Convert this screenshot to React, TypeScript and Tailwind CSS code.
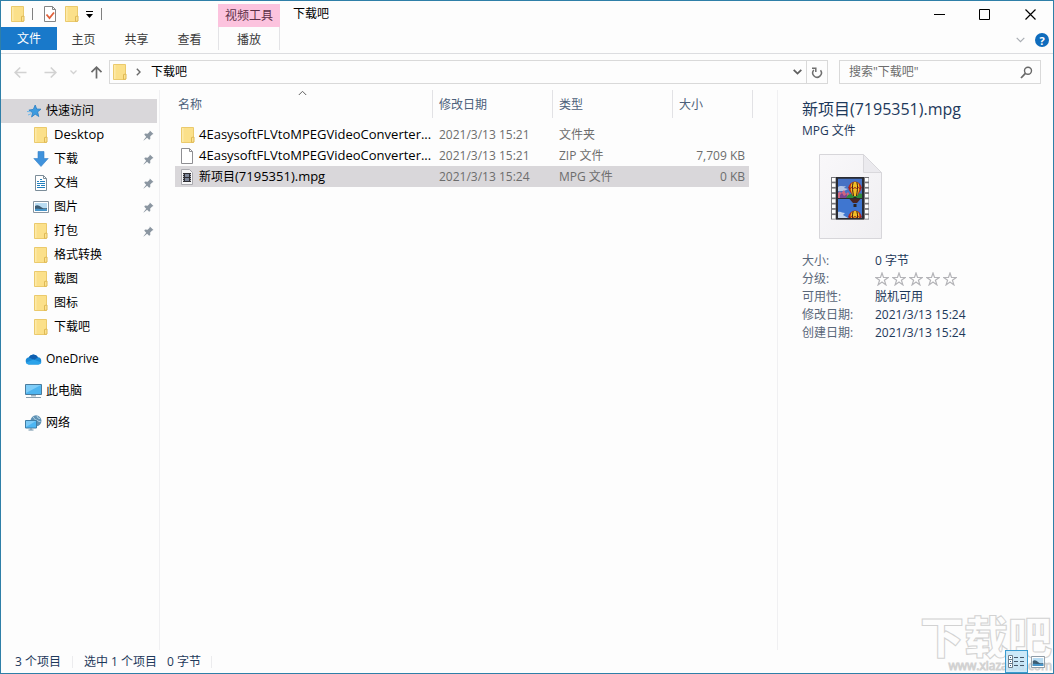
import React, { useState } from 'react';
import clsx from 'clsx';

type IconName = 'folder' | 'star' | 'download' | 'document' | 'picture' | 'cloud' | 'pc' | 'network' | 'file' | 'video';

interface NavEntry {
  label: string;
  icon: IconName;
  pinned?: boolean;
}

const quickAccess: NavEntry[] = [
  { label: 'Desktop', icon: 'folder', pinned: true },
  { label: '下载', icon: 'download', pinned: true },
  { label: '文档', icon: 'document', pinned: true },
  { label: '图片', icon: 'picture', pinned: true },
  { label: '打包', icon: 'folder', pinned: true },
  { label: '格式转换', icon: 'folder' },
  { label: '截图', icon: 'folder' },
  { label: '图标', icon: 'folder' },
  { label: '下载吧', icon: 'folder' },
];

const roots: NavEntry[] = [
  { label: 'OneDrive', icon: 'cloud' },
  { label: '此电脑', icon: 'pc' },
  { label: '网络', icon: 'network' },
];

const files: { name: string; cjk?: string; date: string; type: string; size: string; icon: IconName }[] = [
  { name: '4EasysoftFLVtoMPEGVideoConverter...', date: '2021/3/13 15:21', type: '文件夹', size: '', icon: 'folder' },
  { name: '4EasysoftFLVtoMPEGVideoConverter...', date: '2021/3/13 15:21', type: 'ZIP 文件', size: '7,709 KB', icon: 'file' },
  { name: '(7195351).mpg', cjk: '新项目', date: '2021/3/13 15:24', type: 'MPG 文件', size: '0 KB', icon: 'video' },
];

export default function App() {
  const [selected, setSelected] = useState(2);

  return (
    <div className="relative flex min-h-screen flex-col border border-[#2f7fa8] bg-[#fdfdfd] text-xs text-black font-['Open_Sans','Noto_Sans_CJK_SC',sans-serif]">
      <TitleBar />
      <RibbonTabs />
      <AddressRow />

      <div className="flex flex-1">
        <Sidebar />
        <main className="min-w-0 flex-1 pl-[15px]">
          <FileTable selected={selected} onSelect={setSelected} />
        </main>
        <DetailsPane />
      </div>

      <StatusBar />

      {/* Watermark */}
      <div className="pointer-events-none absolute right-px bottom-0 flex flex-col items-end" aria-hidden="true">
        <span className="text-[44px] leading-[44px] font-black text-transparent [-webkit-text-stroke:1px_#d2d2d2]">下载吧</span>
        <span className="text-xs leading-[14px] text-transparent [-webkit-text-stroke:1px_#d2d2d2]">www.xiazaiba.com</span>
      </div>
    </div>
  );
}

function TitleBar() {
  return (
    <header className="flex h-[26px] items-stretch">
      <div className="flex w-[217px] items-center pl-[9px]">
        <Icon name="folder" />
        <span className="mx-[6px] h-3 w-px bg-[#808080]" />
        <button aria-label="属性" className="ml-[3px]">
          <svg width="16" height="18" viewBox="0 0 16 18">
            <path d="M2.500 1.500h8l3 3v12h-11z" fill="#fff" stroke="#858585" />
            <path d="M10.500 1.500v3h3" fill="none" stroke="#858585" />
            <path d="M4.500 9.500l3 3.500 4.500-5.500" fill="none" stroke="#e0603a" strokeWidth="1.800" />
          </svg>
        </button>
        <button aria-label="新建文件夹" className="ml-[6px]"><Icon name="folder" /></button>
        <button aria-label="自定义快速访问工具栏" className="ml-[5px]">
          <svg width="9" height="9" viewBox="0 0 9 9"><path d="M1 1.500h7" stroke="#000" strokeWidth="1" /><path d="M1 4h7l-3.500 4z" /></svg>
        </button>
        <span className="ml-[7px] h-3 w-px bg-[#808080]" />
      </div>
      <div className="mt-[3px] flex w-[62px] items-center justify-center bg-[#fcc3de] text-[#5b3047]">视频工具</div>
      <h1 className="flex items-center pl-[13px]">下载吧</h1>
      <div className="ml-auto flex">
        <button aria-label="最小化" className="flex w-[46px] items-center justify-center">
          <svg width="11" height="11" viewBox="0 0 11 11"><path d="M0 5.500h11" stroke="#000" /></svg>
        </button>
        <button aria-label="最大化" className="flex w-[45px] items-center justify-center">
          <svg width="11" height="11" viewBox="0 0 11 11"><path d="M.5.500h10v10H.5z" fill="none" stroke="#000" /></svg>
        </button>
        <button aria-label="关闭" className="flex w-[46px] items-center justify-center">
          <svg width="11" height="11" viewBox="0 0 11 11"><path d="M.5.500l10 10M10.500.500l-10 10" stroke="#000" strokeWidth="1.200" /></svg>
        </button>
      </div>
    </header>
  );
}

function RibbonTabs() {
  return (
    <div className="flex h-[27px] border-b border-[#dcdde0] text-[#3b3b3b]">
      <button className="h-[23px] w-[56px] bg-[#1979ca] text-white">文件</button>
      {['主页', '共享', '查看'].map(tab => (
        <button key={tab} className="h-[23px] w-[53px] pt-[2px]">{tab}</button>
      ))}
      <button className="ml-[2px] h-[23px] w-[62px] border-x border-[#e3e3e6] pt-[2px]">播放</button>
      <div className="ml-auto flex h-[26px] items-center gap-[10px] pr-[4px]">
        <button aria-label="展开功能区"><Chevron className="text-[#a9adb3]" /></button>
        <button aria-label="帮助" className="flex size-[14px] items-center justify-center rounded-full bg-[#0f6cbd] text-[11px] leading-none font-bold text-white">?</button>
      </div>
    </div>
  );
}

function AddressRow() {
  return (
    <div className="flex h-9 items-center pr-3">
      <div className="flex w-[108px] items-center pl-[13px]">
        <button aria-label="返回"><Arrow className="text-[#d2d2d2]" /></button>
        <button aria-label="前进" className="ml-[17px]"><Arrow className="rotate-180 text-[#d2d2d2]" /></button>
        <button aria-label="最近位置" className="ml-[13px]">
          <svg width="7" height="5" viewBox="0 0 7 5"><path d="M.5.500l3 3 3-3" fill="none" stroke="#d2d2d2" strokeWidth="1.300" /></svg>
        </button>
        <button aria-label="上移" className="ml-[13px]"><Arrow className="rotate-90 text-[#6a6a6a]" /></button>
      </div>
      <nav className="flex h-6 min-w-0 flex-1 items-center border border-[#d9d9d9] pl-[2px]">
        <Icon name="folder" />
        <svg className="ml-[8px]" width="5" height="8" viewBox="0 0 5 8"><path d="M.8.800L4 4 .8 7.200" fill="none" stroke="#6a6a6a" strokeWidth="1.400" /></svg>
        <button className="ml-[10px] pb-px">下载吧</button>
        <button aria-label="以前的位置" className="mr-[4px] ml-auto"><Chevron className="text-[#5f5f5f]" bold /></button>
        <button aria-label="刷新" className="flex h-full w-[21px] items-center justify-center border-l border-[#d9d9d9]">
          <svg width="12" height="13" viewBox="0 0 12 13">
            <path d="M9.500 4.300a4.300 4.300 0 1 1-6.700-.2" fill="none" stroke="#6f6f6f" strokeWidth="1.500" />
            <path d="M1 2.200h3.800V6" fill="none" stroke="#6f6f6f" strokeWidth="1.500" />
          </svg>
        </button>
      </nav>
      <label className="ml-[11px] flex h-6 w-[202px] items-center border border-[#d9d9d9] pr-[7px] pl-[9px]">
        <input aria-label="搜索" placeholder={'搜索"下载吧"'} className="min-w-0 flex-1 outline-none placeholder:text-[#6d6d6d]" />
        <svg width="13" height="13" viewBox="0 0 13 13">
          <circle cx="8" cy="4.800" r="3.500" fill="none" stroke="#686868" strokeWidth="1.400" />
          <path d="M5.400 7.400L1 12" stroke="#686868" strokeWidth="1.800" />
        </svg>
      </label>
    </div>
  );
}

function Sidebar() {
  return (
    <aside className="w-[159px] border-r border-[#f0f0f2] pt-[9px]">
      <button className="flex h-6 w-[156px] items-center bg-[#d9d7da] pl-[25px]">
        <Icon name="star" />
        <span className="ml-[4px]">快速访问</span>
      </button>
      {quickAccess.map(item => (
        <button key={item.label} className="flex h-6 w-[156px] items-center pr-[3px] pl-[32px]">
          <Icon name={item.icon} />
          <span className={clsx('ml-[5px]', item.label === 'Desktop' && 'text-[13px]')}>{item.label}</span>
          {item.pinned && <PinIcon />}
        </button>
      ))}
      {roots.map(item => (
        <button key={item.label} className="mt-2 flex h-6 w-[156px] items-center pl-[24px]">
          <Icon name={item.icon} />
          <span className="ml-[4px]">{item.label}</span>
        </button>
      ))}
    </aside>
  );
}

function FileTable({ selected, onSelect }: { selected: number; onSelect: (i: number) => void }) {
  const heading = 'flex h-[28px] w-full items-center border-r border-[#e2e2e5] pt-px text-[#4c607a]';

  return (
    <table className="w-[578px] table-fixed">
      <colgroup>
        <col className="w-[258px]" />
        <col className="w-[120px]" />
        <col className="w-[120px]" />
        <col className="w-[76px]" />
        <col className="w-[4px]" />
      </colgroup>
      <thead>
        <tr className="text-left">
          <th className="p-0 pb-[6px] font-normal">
            <button className={clsx(heading, 'relative pl-[3px]')}>
              名称
              <svg className="absolute top-0 left-[123px]" width="9" height="6" viewBox="0 0 9 6"><path d="M.8 5l3.700-3.700L8.200 5" fill="none" stroke="#606060" /></svg>
            </button>
          </th>
          <th className="p-0 pb-[6px] font-normal"><button className={clsx(heading, 'pl-[6px]')}>修改日期</button></th>
          <th className="p-0 pb-[6px] font-normal"><button className={clsx(heading, 'pl-[6px]')}>类型</button></th>
          <th colSpan={2} className="p-0 pb-[6px] font-normal"><button className={clsx(heading, 'pl-[6px]')}>大小</button></th>
        </tr>
      </thead>
      <tbody>
        {files.map((file, i) => {
          const cell = clsx('h-[21px] p-0 leading-[21px]', selected === i && 'bg-[#d9d7da]');
          return (
            <tr key={i} onClick={() => onSelect(i)} className="cursor-default text-[#6d6d6d]">
              <td className={cell}>
                <div className="flex items-center pl-[5px] text-black">
                  <Icon name={file.icon} />
                  <span className="ml-[3px] whitespace-nowrap">{file.cjk}<span className="text-[13px]">{file.name}</span></span>
                </div>
              </td>
              <td className={clsx(cell, 'pl-[6px]')}>{file.date}</td>
              <td className={clsx(cell, 'pl-[6px]')}>{file.type}</td>
              <td className={clsx(cell, 'pr-[4px] text-right')}>{file.size}</td>
              <td className="p-0" />
            </tr>
          );
        })}
      </tbody>
    </table>
  );
}

function DetailsPane() {
  const [rating, setRating] = useState(0);

  return (
    <section className="w-[276px] border-l border-[#f0f0f2] pt-[7px] pl-[24px] text-[#1e395b]">
      <h2 className="text-base leading-6">新项目(7195351).mpg</h2>
      <p className="leading-5">MPG 文件</p>
      <FilmPreview />
      <dl className="mt-[12px] grid grid-cols-[73px_1fr] leading-[18px]">
        <dt className="text-[#5a6779]">大小:</dt>
        <dd>0 字节</dd>
        <dt className="text-[#5a6779]">分级:</dt>
        <dd className="flex items-center gap-[3px]">
          {[1, 2, 3, 4, 5].map(n => (
            <button key={n} aria-label={`${n} 星`} onClick={() => setRating(n)}>
              <svg width="14" height="14" viewBox="0 0 14 14">
                <path d="M7 1l1.500 4.500h4.700L9.400 8.300l1.500 4.600L7 10.100l-3.900 2.800 1.500-4.600L.8 5.500h4.700z" fill={n <= rating ? '#f2c94c' : '#fff'} stroke="#b4b4b8" strokeWidth="1.200" />
              </svg>
            </button>
          ))}
        </dd>
        <dt className="text-[#5a6779]">可用性:</dt>
        <dd>脱机可用</dd>
        <dt className="text-[#5a6779]">修改日期:</dt>
        <dd>2021/3/13 15:24</dd>
        <dt className="text-[#5a6779]">创建日期:</dt>
        <dd>2021/3/13 15:24</dd>
      </dl>
    </section>
  );
}

function StatusBar() {
  return (
    <footer className="flex h-[23px] items-center pl-[14px] text-[#1e395b]">
      <span>3 个项目</span>
      <span className="mx-[11px] h-3 w-px bg-[#ececee]" />
      <span>选中 1 个项目</span>
      <span className="ml-[10px]">0 字节</span>
      <span className="ml-[10px] h-3 w-px bg-[#ececee]" />
      <div className="z-10 ml-auto flex items-center gap-[3px] pr-[8px]">
        <button aria-label="详细信息" className="flex h-[23px] w-[23px] items-center justify-center border border-[#3a9bd0] bg-[#bfe3f7]/80">
          <svg width="17" height="13" viewBox="0 0 17 13">
            <path d="M.5.500h4v12h-4zM.5 4.500h4M.5 8.500h4" fill="#fff" stroke="#6f7f8c" />
            <path d="M2 2.500h1M2 6.500h1M2 10.500h1" stroke="#2a5f8e" />
            <path d="M6 2.500h4M12 2.500h4M6 6.500h4M12 6.500h4M6 10.500h4M12 10.500h4" stroke="#46586a" />
          </svg>
        </button>
        <button aria-label="大图标"><PictureGlyph width={14} height={12} /></button>
      </div>
    </footer>
  );
}

// --- Icons ---

function Arrow({ className }: { className?: string }) {
  return (
    <svg className={className} width="13" height="13" viewBox="0 0 13 13">
      <path d="M6.200 1.500l-5 5 5 5M1.500 6.500h11" fill="none" stroke="currentColor" strokeWidth="1.700" />
    </svg>
  );
}

function Chevron({ className, bold }: { className?: string; bold?: boolean }) {
  return (
    <svg className={className} width="9" height="6" viewBox="0 0 9 6">
      <path d="M.7.800l3.800 3.800L8.300.800" fill="none" stroke="currentColor" strokeWidth={bold ? 1.8 : 1.2} />
    </svg>
  );
}

function PinIcon() {
  return (
    <svg className="ml-auto" width="11" height="11" viewBox="0 0 11 11">
      <path d="M6.800.500l3.700 3.500-1.300.4-2 2.200.1 2.500-1.200.6-2-2L.800 10.500.500 10.200l2.700-3.500-1.900-1.900.7-1.200 2.600.1 2-2z" fill="#8b96a1" />
    </svg>
  );
}

function PictureGlyph({ width = 16, height = 12 }: { width?: number; height?: number }) {
  return (
    <svg width={width} height={height} viewBox="0 0 16 12" preserveAspectRatio="none">
      <path d="M.5.500h15v11H.5z" fill="#fff" stroke="#8795a1" />
      <path d="M2 2h12v8H2z" fill="#b9dcf2" />
      <path d="M2 5c2-1.500 4-.8 6 1s4 1.200 6 1v3H2z" fill="#3d5c72" />
      <path d="M2 8c3-.8 6 .6 12-.3V10H2z" fill="#4795c9" />
    </svg>
  );
}

function Icon({ name }: { name: IconName }) {
  switch (name) {
    case 'folder':
      return (
        <svg width="16" height="16" viewBox="0 0 16 16">
          <path d="M1.500.500h12v15h-12z" fill="#fbe08a" stroke="#ebca6c" />
          <path d="M2 1h1.500v14H2z" fill="#fdeaa9" />
          <path d="M11.500 10.500l2.500-.5v5l-2.500.5z" fill="#fce391" stroke="#dfb955" />
        </svg>
      );
    case 'star':
      return (
        <svg width="16" height="16" viewBox="0 0 16 16">
          <path d="M9.200 2l1.500 4 4.300.2-3.400 2.700 1.200 4.600-3.600-2.300L5.600 14l.9-4.300-3.600-2.600 4.400-.7z" fill="#3d9be0" stroke="#2a7fc4" strokeWidth=".8" />
          <path d="M1 8.500l4 .3M2 12l3-1.200" stroke="#70b8ea" />
        </svg>
      );
    case 'download':
      return (
        <svg width="16" height="16" viewBox="0 0 16 16">
          <path d="M5 .5h6v7h4.200L8 15.500.8 7.500H5z" fill="#3f92dc" stroke="#3582c8" strokeWidth=".6" />
        </svg>
      );
    case 'document':
      return (
        <svg width="16" height="16" viewBox="0 0 16 16">
          <path d="M2.500.500h8l3 3v12h-11z" fill="#fff" stroke="#7c8d99" />
          <path d="M10.500.500v3h3" fill="none" stroke="#7c8d99" />
          <path d="M7 4.500h2M4 6.500h2M7 6.500h5M4 8.500h8M4 10.500h3M8 10.500h4M4 12.500h8" stroke="#2380bd" strokeWidth="1.200" />
        </svg>
      );
    case 'picture':
      return <PictureGlyph />;
    case 'cloud':
      return (
        <svg width="17" height="16" viewBox="0 0 17 16">
          <path d="M3.800 6.200A5.300 5.300 0 0 1 13 6.200a3.700 3.700 0 0 1 .3 7.300H3.800A3.700 3.700 0 0 1 3.800 6.200z" fill="#1b8ad6" />
          <path d="M3.800 6.200A5.300 5.300 0 0 1 13 6.200L9 9z" fill="#0f5fb0" />
          <path d="M.8 11.800l7.700-3.200 8 3a3.500 3.500 0 0 1-3.200 1.900H3.800A3.600 3.600 0 0 1 .8 11.800z" fill="#2ba3ea" />
        </svg>
      );
    case 'pc':
      return (
        <svg width="17" height="16" viewBox="0 0 17 16">
          <path d="M.5 1.500h16v10H.5z" fill="#4fb5f0" stroke="#4b7c9d" />
          <path d="M1 2h15L1 10z" fill="#7fcdf8" />
          <path d="M6 12h5v1.500H6z" fill="#9fb2bf" />
          <path d="M1 14.500h15" stroke="#8ba0ae" />
        </svg>
      );
    case 'network':
      return (
        <svg width="17" height="16" viewBox="0 0 17 16">
          <circle cx="11" cy="5.800" r="5.500" fill="#5f92b5" />
          <path d="M8 2c2 1 1 3 3 3s2 2 4.500 1.500M12 1l1 2 2 .5" fill="none" stroke="#b4d3e4" />
          <path d="M.5 5.500h11v7.500H.5z" fill="#4db6f3" stroke="#3f7ea6" />
          <path d="M1 6h10L1 12z" fill="#7dcbf7" />
          <path d="M3.500 15h5M6 13v2" stroke="#6b8ea5" />
        </svg>
      );
    case 'file':
      return (
        <svg width="16" height="16" viewBox="0 0 16 16">
          <path d="M1.500.500h8l3 3v12h-11z" fill="#fff" stroke="#8e8e92" />
          <path d="M9.500.500v3h3" fill="none" stroke="#8e8e92" />
        </svg>
      );
    case 'video':
      return (
        <svg width="16" height="16" viewBox="0 0 16 16">
          <path d="M1.500.500h8l3 3v12h-11z" fill="#f7f7f8" stroke="#a9a9ae" />
          <path d="M3 4h8v9H3z" fill="#2e2e33" />
          <path d="M5 5h4v3H5zM5 9h4v3H5z" fill="#7b8496" />
          <path d="M3.500 5v8M10.500 5v8" stroke="#b5b5ba" strokeDasharray="1 1" />
        </svg>
      );
  }
}

function Balloon({ y }: { y: number }) {
  return (
    <g transform={`translate(24 ${y})`}>
      <path d="M-6.500-1a6.500 6.500 0 0 1 13 0c0 3-3 5-4.500 8h-4c-1.500-3-4.500-5-4.500-8z" fill="#b8271d" />
      <path d="M-4.500-1c0-3 1-5 2.500-6h4c1.500 1 2.500 3 2.500 6C4.500 2 3 4 2 7h-4c-1-3-2.500-5-2.500-8z" fill="#f0bd26" />
      <path d="M-1.800-7C-3.500-2-2 3-1.500 7M1.800-7C3.500-2 2 3 1.500 7" fill="none" stroke="#3d1a17" strokeWidth="1" />
      <path d="M-6.500-1.500q1.500 2 3.200 0 1.600 2 3.300 0 1.600 2 3.300 0 1.600 2 3.200 0" fill="none" stroke="#8e2118" />
      <path d="M-1.500 8h3v2h-3z" fill="#2d2320" />
    </g>
  );
}

function FilmPreview() {
  const holes = [0, 1, 2, 3, 4, 5, 6, 7];

  return (
    <svg className="mt-[13px] ml-[17px]" width="64" height="86" viewBox="0 0 64 86">
      <defs>
        <linearGradient id="paper" x1="0" y1="0" x2="1" y2="1">
          <stop offset="0" stopColor="#f9f8fa" />
          <stop offset="1" stopColor="#f0eff2" />
        </linearGradient>
        <clipPath id="top-frame"><path d="M7 1.500h24v19.500H7z" /></clipPath>
        <clipPath id="bottom-frame"><path d="M7 22h24v19H7z" /></clipPath>
      </defs>
      <path d="M.5.500h44l18 18v66H.5z" fill="url(#paper)" stroke="#d7d6da" />
      <path d="M44.500.500v18h18z" fill="#ebeaee" stroke="#d9d8dc" />
      <g transform="translate(12 23)">
        <path d="M0 0h38v42.500H0z" fill="#77777b" />
        <path d="M5 0h28v42.500H5z" fill="#2a2b31" />
        {holes.map(i => (
          <g key={i} fill="#fff">
            <rect x="1" y={1 + i * 5.3} width="3.500" height="3.600" />
            <rect x="34" y={1 + i * 5.3} width="3.500" height="3.600" />
          </g>
        ))}
        <g clipPath="url(#top-frame)">
          <path d="M6 1.500h26v20H6z" fill="#4672c4" />
          <path d="M7 10c2-2 4 0 8-1l-2 2 4 1-4 2H7z" fill="#b3c5e4" />
          <path d="M6 17l3-3 1 2 3-3 2 4 2-2 3 5v1H6z" fill="#d06480" />
          <path d="M9 18l2-2 2 3 3-2v4H9z" fill="#7a4591" />
          <path d="M17 18c4-2 9-2 15-1v4H15z" fill="#2f8b3c" />
          <Balloon y={12} />
        </g>
        <g clipPath="url(#bottom-frame)">
          <path d="M6 22h26v19H6z" fill="#3f76d0" />
          <path d="M7 35c3-1 4 1 7 1l-2 2 5 3H7z" fill="#c3d4ee" />
          <path d="M18.500 22h11l-3.500 4h-4z" fill="#4a2422" />
          <path d="M22.500 27h3v3h-3z" fill="#2d2320" />
          <Balloon y={41} />
        </g>
      </g>
    </svg>
  );
}
